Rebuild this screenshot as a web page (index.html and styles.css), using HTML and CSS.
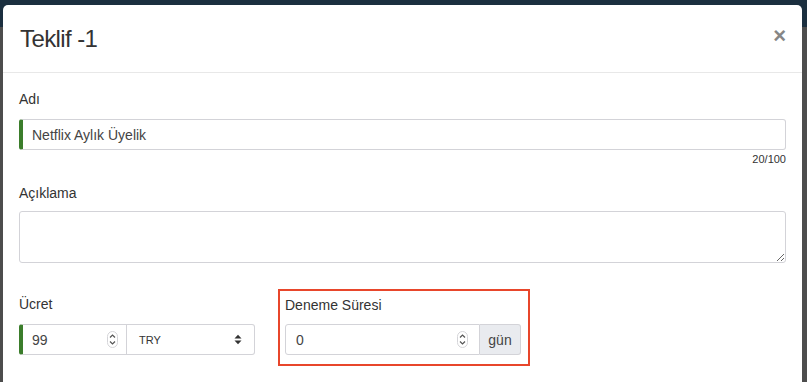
FILE: index.html
```html
<!DOCTYPE html>
<html lang="tr">
<head>
    <meta charset="UTF-8">
    <title>Teklif -1</title>
    <link rel="stylesheet" href="styles.css">
</head>
<body>
    <div class="modal">
        <div class="modal-header">
            <h2 class="modal-title">Teklif -1</h2>
            <button class="close-btn">&times;</button>
        </div>

        <div class="modal-body">
            <div class="form-group">
                <label class="field-label">Adı</label>
                <div class="field required">
                    <input class="field-input" type="text" value="Netflix Aylık Üyelik">
                </div>
                <div class="counter">20/100</div>
            </div>

            <div class="form-group">
                <label class="field-label desc-label">Açıklama</label>
                <textarea class="field-textarea"></textarea>
            </div>

            <div class="form-row">
                <div class="price-col">
                    <label class="field-label">Ücret</label>
                    <div class="input-group">
                        <div class="field required price-field">
                            <input class="field-input" type="text" value="99">
                            <svg class="spinner" width="11" height="17" viewBox="0 0 11 17">
                                <rect x="0.5" y="0.5" width="10" height="16" rx="5" fill="#fff" stroke="#d4d4d8"/>
                                <path d="M3 6.5 L5.5 4 L8 6.5" fill="none" stroke="#555" stroke-width="1.2"/>
                                <path d="M3 10.5 L5.5 13 L8 10.5" fill="none" stroke="#555" stroke-width="1.2"/>
                            </svg>
                        </div>
                        <div class="field currency-field">
                            <span class="currency">TRY</span>
                            <svg width="8" height="11" viewBox="0 0 8 11">
                                <path d="M0.5 4.5 L4 0.8 L7.5 4.5 Z" fill="#333"/>
                                <path d="M0.5 6.5 L4 10.2 L7.5 6.5 Z" fill="#333"/>
                            </svg>
                        </div>
                    </div>
                </div>

                <div class="trial-col">
                    <label class="field-label">Deneme Süresi</label>
                    <div class="input-group">
                        <div class="field trial-field">
                            <input class="field-input" type="text" value="0">
                            <svg class="spinner" width="11" height="17" viewBox="0 0 11 17">
                                <rect x="0.5" y="0.5" width="10" height="16" rx="5" fill="#fff" stroke="#d4d4d8"/>
                                <path d="M3 6.5 L5.5 4 L8 6.5" fill="none" stroke="#555" stroke-width="1.2"/>
                                <path d="M3 10.5 L5.5 13 L8 10.5" fill="none" stroke="#555" stroke-width="1.2"/>
                            </svg>
                        </div>
                        <span class="addon">gün</span>
                    </div>
                </div>
            </div>
        </div>
    </div>
</body>
</html>
```

FILE: styles.css
```css
body {
    margin: 0;
    height: 382px;
    overflow: hidden;
    font-family: 'Liberation Sans', Arial, sans-serif;
    color: #333;
    background: linear-gradient(to bottom, #1b2f3f 0, #1b2f3f 27px, #4d4d4d 27px);
}

.modal {
    margin: 5px 5px 0 3px;
    height: 377px;
    background-color: #fff;
    border-radius: 5px 5px 0 0;
    box-sizing: border-box;
}

.modal-header {
    display: flex;
    align-items: center;
    justify-content: space-between;
    height: 68px;
    padding: 0 16px 0 17px;
    border-bottom: 1px solid #e8e8e8;
    box-sizing: border-box;
}

.modal-title {
    margin: 0;
    font-size: 24px;
    font-weight: 400;
    letter-spacing: -0.6px;
    color: #333;
}

.close-btn {
    border: none;
    background: none;
    padding: 0;
    margin-top: -5px;
    font-family: 'Liberation Sans', Arial, sans-serif;
    font-size: 22px;
    font-weight: 700;
    color: #868686;
    cursor: pointer;
    line-height: 1;
}

.modal-body {
    padding: 16px 16px 0 16px;
}

.form-group {
    display: flex;
    flex-direction: column;
}

.form-group + .form-group {
    margin-top: 17px;
}

.field-label {
    font-size: 14px;
    line-height: 20px;
    margin-bottom: 10px;
    color: #333;
}

.desc-label {
    margin-bottom: 8px;
}

.field {
    display: flex;
    align-items: center;
    height: 31px;
    border: 1px solid #d3d3d8;
    border-radius: 3px;
    background: #fff;
    box-sizing: border-box;
}

.field.required {
    border-left: 4px solid #3b7d2b;
}

.field-input {
    flex: 1;
    min-width: 0;
    border: none;
    outline: none;
    background: transparent;
    padding: 0 0 0 9px;
    font-family: 'Liberation Sans', Arial, sans-serif;
    font-size: 14px;
    color: #444;
}

.counter {
    align-self: flex-end;
    font-size: 11px;
    line-height: 14px;
    margin-top: 2px;
    color: #333;
}

.field-textarea {
    display: block;
    height: 52px;
    border: 1px solid #d3d3d8;
    border-radius: 3px;
    box-sizing: border-box;
    resize: vertical;
    font-family: 'Liberation Sans', Arial, sans-serif;
    font-size: 14px;
    outline: none;
}

.form-row {
    display: flex;
    align-items: flex-start;
    gap: 23px;
    margin-top: 26px;
}

.price-col {
    display: flex;
    flex-direction: column;
    width: 236px;
    padding-top: 5px;
}

.input-group {
    display: flex;
}

.price-field {
    width: 108px;
    border-radius: 3px 0 0 3px;
    padding-right: 8px;
}

.spinner {
    flex-shrink: 0;
}

.currency-field {
    flex: 1;
    justify-content: space-between;
    border-left: none;
    border-radius: 0 3px 3px 0;
    padding: 0 12px 0 12px;
}

.currency {
    font-size: 11px;
    color: #333;
}

.trial-col {
    display: flex;
    flex-direction: column;
    width: 252px;
    padding: 4px 7px 9px 5px;
    border: 2px solid #e8462b;
    box-sizing: border-box;
}

.trial-col .field-label {
    margin-bottom: 9px;
}

.trial-field {
    width: 195px;
    border-radius: 3px 0 0 3px;
    padding-left: 1px;
    padding-right: 11px;
}

.addon {
    display: flex;
    align-items: center;
    justify-content: center;
    flex: 1;
    height: 31px;
    box-sizing: border-box;
    border: 1px solid #d3d3d8;
    border-left: none;
    border-radius: 0 3px 3px 0;
    background-color: #e9ebef;
    font-size: 14px;
    color: #444;
}
```
